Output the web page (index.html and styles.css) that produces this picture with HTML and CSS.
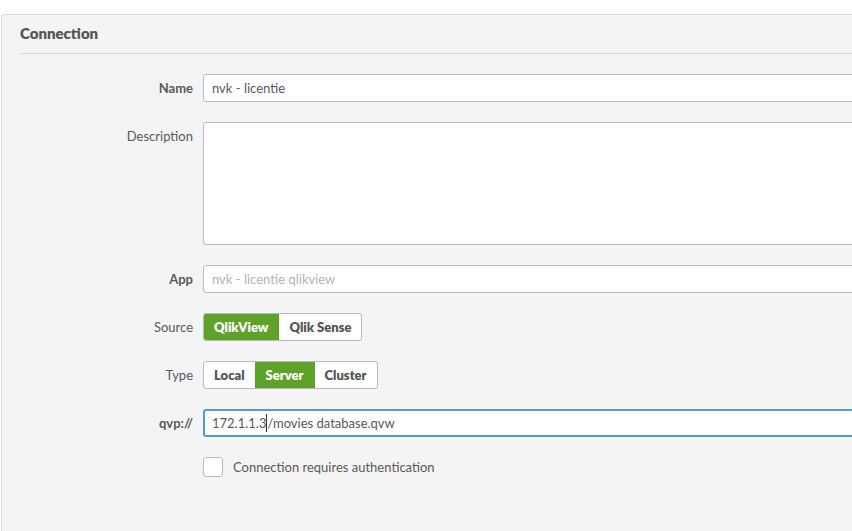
FILE: index.html
```html
<!DOCTYPE html>
<html>
<head>
<meta charset="utf-8">
<link rel="stylesheet" href="styles.css">
</head>
<body>
<section class="panel">
  <header class="panel-head"><h2 class="panel-title">Connection</h2></header>
  <div class="form">
    <label class="lbl bold">Name</label>
    <div class="field"><div class="input">nvk - licentie</div></div>

    <label class="lbl">Description</label>
    <div class="field"><div class="input textarea"></div></div>

    <label class="lbl bold">App</label>
    <div class="field"><div class="input placeholder">nvk - licentie qlikview</div></div>

    <label class="lbl">Source</label>
    <div class="field">
      <div class="seg">
        <span class="seg-btn active">QlikView</span>
        <span class="seg-btn">Qlik Sense</span>
      </div>
    </div>

    <label class="lbl">Type</label>
    <div class="field">
      <div class="seg">
        <span class="seg-btn">Local</span>
        <span class="seg-btn active">Server</span>
        <span class="seg-btn">Cluster</span>
      </div>
    </div>

    <label class="lbl bold">qvp://</label>
    <div class="field"><div class="input focus">172.1.1.3<span class="caret"></span>/movies database.qvw</div></div>

    <span class="lbl"></span>
    <div class="field check-row"><span class="checkbox"></span><span class="check-text">Connection requires authentication</span></div>
  </div>
</section>
</body>
</html>
```

FILE: styles.css
```css
html, body {
  margin: 0;
  padding: 0;
  background: #ffffff;
  overflow: hidden;
  height: 100%;
}
body {
  font-family: Lato, "Liberation Sans", sans-serif;
  color: #595959;
  font-size: 13px;
  padding-top: 14px;
  padding-left: 1px;
  box-sizing: border-box;
}
.panel {
  height: 100%;
  box-sizing: border-box;
  overflow: hidden;
  background: #f4f4f4;
  border: 1px solid #dcdcdc;
  border-right: none;
  border-bottom: none;
  border-radius: 3px 0 0 0;
}
.panel-head {
  margin-left: 18px;
  height: 39px;
  box-sizing: border-box;
  padding-bottom: 3px;
  border-bottom: 1px solid #d9d9d9;
  display: flex;
  align-items: center;
}
.panel-title {
  margin: 0;
  font-size: 15px;
  font-weight: 800;
  color: #555555;
}
.form {
  display: grid;
  grid-template-columns: 191px 1fr;
  column-gap: 10px;
  row-gap: 20px;
  padding-top: 20px;
}
.lbl {
  text-align: right;
  line-height: 28px;
  height: 28px;
  font-size: 13px;
  color: #595959;
}
.lbl.bold { font-weight: 700; }
.field { display: flex; min-width: 0; }
.input {
  flex: none;
  box-sizing: border-box;
  width: 800px;
  height: 28px;
  background: #fff;
  border: 1px solid #b9b9b9;
  border-radius: 3px;
  padding: 0 8px;
  line-height: 26px;
  font-size: 13px;
  color: #595959;
  white-space: nowrap;
}
.textarea { height: 123px; }
.placeholder { color: #b3b3b3; }
.focus {
  border: 2px solid #4e9fce;
  line-height: 24px;
  padding-left: 7px;
}
.caret {
  display: inline-block;
  width: 1px;
  height: 18px;
  background: #333;
  vertical-align: -4px;
}
.seg {
  display: flex;
  height: 28px;
  box-sizing: border-box;
  border: 1px solid #b9b9b9;
  border-radius: 3px;
  background: #fff;
  overflow: hidden;
}
.seg-btn {
  padding: 0 10px;
  line-height: 26px;
  font-weight: 800;
  font-size: 13px;
  color: #555;
  border-left: 1px solid #b9b9b9;
}
.seg-btn:first-child { border-left: none; }
.seg-btn.active {
  background: #5fa22a;
  color: #fff;
  border-color: #5fa22a;
}
.seg-btn.active + .seg-btn { border-left-color: #5fa22a; }
.check-row {
  align-items: center;
  height: 20px;
}
.checkbox {
  box-sizing: border-box;
  width: 20px;
  height: 20px;
  background: #fff;
  border: 1px solid #b9b9b9;
  border-radius: 3px;
  margin-right: 10px;
}
.check-text { font-size: 13px; }
```
